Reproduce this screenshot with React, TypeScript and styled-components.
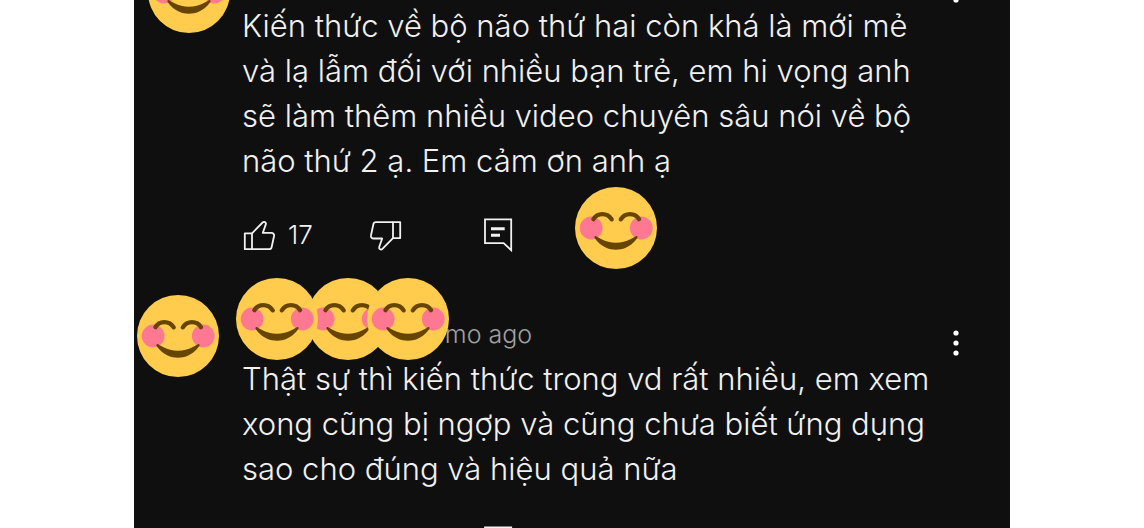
import React from "react";
import styled, { createGlobalStyle } from "styled-components";

const GlobalStyle = createGlobalStyle`
  * { box-sizing: border-box; }
  html, body { margin: 0; padding: 0; background: #fff; }
  body { height: 100vh; overflow: hidden; }
`;

const Feed = styled.main`
  display: flex;
  flex-direction: column;
  gap: 59px;
  width: 100%;
  max-width: 876px;
  margin: -42px auto 0;
  background: #0f0f0f;
  color: #f1f1f1;
  font-family: Inter, "Noto Sans", sans-serif;
  font-weight: 300;
`;

const CommentCard = styled.article`
  position: relative;
  display: grid;
  grid-template-columns: minmax(0, 1fr) 30px;
  padding: 0 39px 0 108px;
`;

const Header = styled.header`
  display: flex;
  align-items: center;
  height: 45px;
  padding-left: 188px;
  font-size: 25px;
  line-height: 32px;
  color: #a0a0a0;
`;

const Body = styled.p`
  grid-column: 1 / -1;
  margin: 0;
  font-size: 31px;
  line-height: 45px;
  white-space: pre-line;
`;

const Actions = styled.footer`
  grid-column: 1 / -1;
  display: grid;
  grid-template-columns: 126px 114px auto;
  align-items: center;
  justify-content: start;
  height: 34px;
  margin-top: 35px;
`;

const IconButton = styled.button`
  display: flex;
  align-items: center;
  gap: 12px;
  padding: 0;
  border: 0;
  background: none;
  color: inherit;
  font: inherit;
  font-size: 26px;
  line-height: 32px;
  cursor: pointer;
`;

const MenuButton = styled(IconButton)`
  align-items: flex-end;
  justify-content: center;
  height: 45px;
`;

const StickerArt = styled.svg<{ $x: number; $y: number; $front?: boolean }>`
  position: absolute;
  left: ${(p) => p.$x}px;
  top: ${(p) => p.$y}px;
  z-index: ${(p) => (p.$front ? 2 : 1)};
  width: 82px;
  height: 82px;
`;

type StickerSpot = { x: number; y: number; front?: boolean };

const Sticker = ({ x, y, front }: StickerSpot) => (
  <StickerArt $x={x} $y={y} $front={front} viewBox="0 0 36 36" aria-hidden="true">
    <circle cx="18" cy="18" r="18" fill="#ffcc4d" />
    <circle cx="7.1" cy="18" r="5" fill="#ff7892" />
    <circle cx="29.1" cy="18" r="5" fill="#ff7892" />
    <g fill="none" stroke="#664500" strokeWidth="1.9" strokeLinecap="round">
      <path d="M8.1 14.1C9 12.5 10.4 11.9 12 11.9S15.1 12.6 16.1 14.2" />
      <path d="M20.1 14.2C21.1 12.6 22.6 11.9 24.1 11.9S27.2 12.5 28.1 14.1" />
    </g>
    <path
      fill="#664500"
      d="M27.335 21.629c-.178-.161-.444-.171-.635-.029-.039.029-3.922 2.9-8.7 2.9-4.766 0-8.662-2.871-8.7-2.9-.191-.142-.457-.13-.635.029-.177.16-.217.424-.094.628C8.7 22.472 11.788 27.5 18 27.5s9.301-5.028 9.429-5.243c.123-.205.084-.468-.094-.628z"
    />
  </StickerArt>
);

const ThumbPaths = () => (
  <g fill="none" stroke="currentColor" strokeWidth="1.8" strokeLinejoin="round">
    <path d="M2.8 14.3H10V30.2H2.8Z" />
    <path d="M10 14.3 20.6 3.5C22 2.2 24.4 3.2 23.8 5.4L20.8 13.9H29.2C31.3 13.9 32.5 15.3 32 17.2L29.6 28.2C29.3 29.5 28.4 30.2 27.1 30.2H10" />
  </g>
);

const LikeIcon = () => (
  <svg width="34" height="34" viewBox="0 0 34 34" aria-hidden="true">
    <g transform="translate(0 1)">
      <ThumbPaths />
    </g>
  </svg>
);

const DislikeIcon = () => (
  <svg width="34" height="34" viewBox="0 0 34 34" aria-hidden="true">
    <g transform="rotate(180 17.5 17.2)">
      <ThumbPaths />
    </g>
  </svg>
);

const ReplyIcon = () => (
  <svg width="34" height="34" viewBox="0 0 34 34" aria-hidden="true">
    <path d="M3 1.4H29.2V32.2L21.6 25.2H3Z" fill="none" stroke="currentColor" strokeWidth="1.8" />
    <path d="M9 10.7H22.7M9 17.3H18" stroke="currentColor" strokeWidth="2.9" />
  </svg>
);

const DotsIcon = () => (
  <svg width="30" height="28" viewBox="0 0 30 28" fill="#fff" aria-hidden="true">
    <circle cx="15" cy="5" r="2.6" />
    <circle cx="15" cy="15" r="2.6" />
    <circle cx="15" cy="25" r="2.6" />
  </svg>
);

type CommentProps = {
  age: string;
  text: string;
  likes?: number;
  stickers: StickerSpot[];
};

const Comment = ({ age, text, likes, stickers }: CommentProps) => (
  <CommentCard>
    <Header>{age}</Header>
    <MenuButton aria-label="More options">
      <DotsIcon />
    </MenuButton>
    <Body>{text}</Body>
    <Actions>
      <IconButton aria-label="Like">
        <LikeIcon />
        {likes}
      </IconButton>
      <IconButton aria-label="Dislike">
        <DislikeIcon />
      </IconButton>
      <IconButton aria-label="Reply">
        <ReplyIcon />
      </IconButton>
    </Actions>
    {stickers.map((s) => (
      <Sticker key={`${s.x}-${s.y}`} {...s} />
    ))}
  </CommentCard>
);

const comments: CommentProps[] = [
  {
    age: "",
    text: "Kiến thức về bộ não thứ hai còn khá là mới mẻ\nvà lạ lẫm đối với nhiều bạn trẻ, em hi vọng anh\nsẽ làm thêm nhiều video chuyên sâu nói về bộ\nnão thứ 2 ạ. Em cảm ơn anh ạ",
    likes: 17,
    stickers: [
      { x: 14, y: -7 },
      { x: 441, y: 229 },
    ],
  },
  {
    age: "5mo ago",
    text: "Thật sự thì kiến thức trong vd rất nhiều, em xem\nxong cũng bị ngợp và cũng chưa biết ứng dụng\nsao cho đúng và hiệu quả nữa",
    stickers: [
      { x: 3, y: -16 },
      { x: 102, y: -33, front: true },
      { x: 173, y: -33 },
      { x: 233, y: -33, front: true },
    ],
  },
];

export default function App() {
  return (
    <>
      <GlobalStyle />
      <Feed>
        {comments.map((c) => (
          <Comment key={c.text} {...c} />
        ))}
      </Feed>
    </>
  );
}
